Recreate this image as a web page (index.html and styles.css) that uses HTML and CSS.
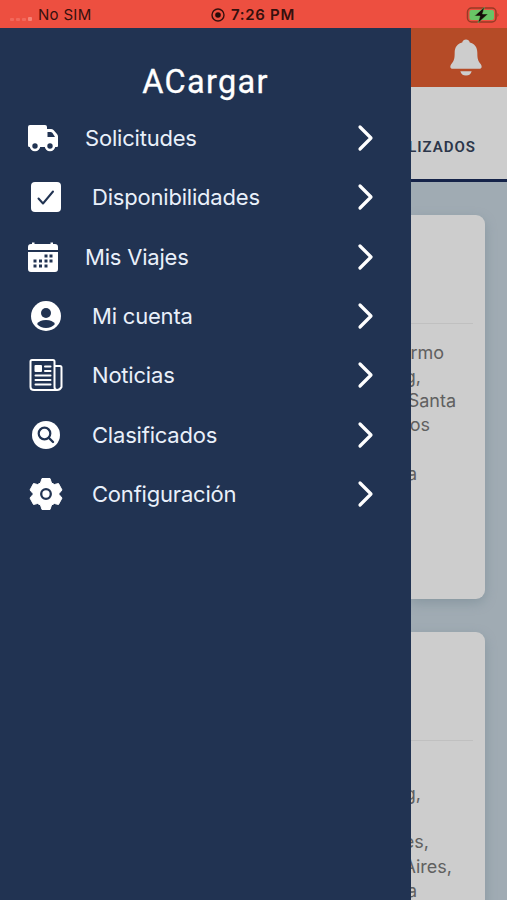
FILE: index.html
```html
<!DOCTYPE html>
<html lang="es">
<head>
<meta charset="utf-8">
<title>ACargar</title>
<link rel="stylesheet" href="styles.css">
</head>
<body>
<header class="status">
  <div class="carrier"><span class="signal"><i></i><i></i><i></i><i></i></span><span>No SIM</span></div>
  <div class="clock"><svg width="14" height="14" viewBox="0 0 14 14"><circle cx="7" cy="7" r="6" fill="none" stroke="#35100d" stroke-width="1.4"/><circle cx="7" cy="7" r="2.8" fill="#260b09"/></svg><span>7:26 PM</span></div>
  <svg class="battery" width="34" height="18" viewBox="0 0 34 18"><rect x="1.5" y="2" width="28.5" height="14" rx="4" fill="none" stroke="#963b25" stroke-width="1.5"/><rect x="3.5" y="4" width="24.5" height="10" rx="2" fill="#69c466"/><path d="M31.5 7q2 2 0 4z" fill="#963b25"/><path d="M18.500 1 8.500 10h5.500l-2 7L22 8h-5.500z" fill="#160d09" stroke="#69c466" stroke-width=".5"/></svg>
</header>
<div class="screen">
  <nav class="drawer">
    <h1>ACargar</h1>
    <ul>
      <li class="near"><svg class="icon" viewBox="0 0 36 36"><path fill="#fff" d="M5 5h15q2 0 2 2v2h4q1.500 0 2.500 1l3.500 4q1 1 1 2.500V26q0 1-1 1H4.500Q3 27 3 25.500V7q0-2 2-2z"/><path fill="#213352" d="M22.500 12h3q1 0 2 1l2.500 4h-7.500z"/><circle cx="10" cy="26" r="4" fill="#213352" stroke="#fff" stroke-width="2.600"/><circle cx="25" cy="26" r="4" fill="#213352" stroke="#fff" stroke-width="2.600"/></svg><span>Solicitudes</span><svg class="chevron" viewBox="0 0 18 28"><path d="m4 3 11 11L4 25"/></svg></li>
      <li><svg class="icon" viewBox="0 0 36 36"><rect x="3" y="3" width="30" height="30" rx="4" fill="#fff"/><path d="m10.500 19.500 4.500 5 10-12" fill="none" stroke="#213352" stroke-width="2" stroke-linecap="round" stroke-linejoin="round"/></svg><span>Disponibilidades</span><svg class="chevron" viewBox="0 0 18 28"><path d="m4 3 11 11L4 25"/></svg></li>
      <li class="near"><svg class="icon" viewBox="0 0 36 36"><path fill="#fff" d="M3 11V8q0-3 3-3h1V3.500h2.500V5h16V3.500H28V5h2q3 0 3 3v3zM3 13h30v17q0 3-3 3H6q-3 0-3-3z"/><path fill="#213352" d="M19.500 15.500h3v3h-3zm5 0h3v3h-3zM8.500 20.500h3v3h-3zm5.500 0h3v3h-3zm5.500 0h3v3h-3zm5 0h3v3h-3zM8.500 25.500h3v3h-3zm5.500 0h3v3h-3zm5.500 0h3v3h-3z"/></svg><span>Mis Viajes</span><svg class="chevron" viewBox="0 0 18 28"><path d="m4 3 11 11L4 25"/></svg></li>
      <li><svg class="icon" viewBox="0 0 36 36"><circle cx="18" cy="18" r="15" fill="#fff"/><circle cx="18" cy="15" r="5" fill="#213352"/><path d="M9 26q2.500-4 9-4t9 4q-3.500 4-9 4t-9-4z" fill="#213352"/></svg><span>Mi cuenta</span><svg class="chevron" viewBox="0 0 18 28"><path d="m4 3 11 11L4 25"/></svg></li>
      <li><svg class="icon" viewBox="0 0 36 36" fill="none" stroke="#fff" stroke-width="2"><path d="M29 33H6q-3.500 0-3.500-3V4.500Q2.500 3 4 3h21q1.500 0 1.500 1.500V30q0 3 2.700 3T33.500 30V10.500Q33.500 9 32 9h-5.500"/><path d="M17 9.500h5.500M17 14h5.500M7.500 18.500h15M7.500 23h15M7.500 27.500h15" stroke-linecap="round"/><rect x="6.500" y="8" width="7.500" height="7" rx="1" fill="#fff" stroke="none"/></svg><span>Noticias</span><svg class="chevron" viewBox="0 0 18 28"><path d="m4 3 11 11L4 25"/></svg></li>
      <li><svg class="icon" viewBox="0 0 36 36"><circle cx="18" cy="18" r="14" fill="#fff"/><circle cx="16.500" cy="16.500" r="5.800" fill="none" stroke="#213352" stroke-width="2.200"/><path d="m21 21 4 4" stroke="#213352" stroke-width="2.400" stroke-linecap="round"/></svg><span>Clasificados</span><svg class="chevron" viewBox="0 0 18 28"><path d="m4 3 11 11L4 25"/></svg></li>
      <li><svg class="icon" viewBox="0 0 36 36"><path d="M14 2.500h8l1.500 4.500 3 1.500 4-1L34 14l-3 3.500v1l3 3.500-3.500 6.500-4-1-3 1.500-1.500 4.500h-8L12.500 29l-3-1.500-4 1L2 22l3-3.500v-1L2 14l3.500-6.500 4 1 3-1.500z" fill="#fff" stroke="#fff" stroke-width="1" stroke-linejoin="round"/><circle cx="18" cy="18" r="4.800" fill="#fff" stroke="#213352" stroke-width="2.300"/></svg><span>Configuración</span><svg class="chevron" viewBox="0 0 18 28"><path d="m4 3 11 11L4 25"/></svg></li>
    </ul>
  </nav>
  <main class="content">
    <div class="toolbar"><svg width="34" height="39" viewBox="0 0 36 40"><path d="M18 1q3 0 4 3c5 1 8 5 8 11 0 7 1 9 3.500 12 2 3 1 5-1.500 5H4c-2.500 0-3.500-2-1.500-5C5 24 6 22 6 15 6 9 9 5 14 4q1-3 4-3zM12 34.500h12q-1 4.500-6 4.500t-6-4.500z" fill="#cdcdcd"/></svg></div>
    <div class="tabs"><p class="tab">LIZADOS</p></div>
    <div class="list">
      <section class="card"><div class="head"></div><div class="lines"><p style="width:33px">rmo</p><p style="width:10px">g,</p><p style="width:45px">Santa</p><p style="width:19px">os</p><p></p><p style="width:6px">a</p></div></section>
      <section class="card"><div class="head"></div><div class="lines"><p></p><p style="width:10px">g,</p><p></p><p style="width:18px">es,</p><p style="width:41px">Aires,</p><p style="width:6px">a</p></div></section>
    </div>
  </main>
</div>
</body>
</html>
```
FILE: styles.css
```css
* { box-sizing: border-box; }
body { margin: 0; height: 900px; overflow: hidden; font-family: Inter, "Liberation Sans", sans-serif; }
h1, ul, p { margin: 0; padding: 0; }
svg { display: block; flex: none; }
.status { height: 28px; display: grid; grid-template-columns: 1fr auto 1fr; align-items: center; padding: 1px 7px 0 10px; background: #ed4f40; color: #35100d; font-size: 15px; }
.carrier { display: flex; align-items: center; gap: 6px; letter-spacing: 0.3px; }
.signal { display: flex; align-items: flex-end; gap: 2px; padding-top: 8px; }
.signal i { width: 4px; height: 3px; border-radius: 1px; background: #f2685b; }
.signal i:last-child { height: 4px; background: #f58377; }
.clock { display: flex; align-items: center; gap: 6px; margin-left: -4px; font-weight: 600; letter-spacing: 0.8px; }
.clock { letter-spacing: 0.7px; }
.battery { justify-self: end; }
.screen { height: 872px; display: grid; grid-template-columns: 411px 96px; }
.drawer { background: #213352; color: #e9f0fa; padding-top: 33px; }
h1 { height: 47.500px; text-align: center; font: 400 32.500px/43px Roboto, sans-serif; letter-spacing: 1.3px; color: #fff; -webkit-text-stroke: 0.3px #fff; }
ul { list-style: none; }
li { height: 59.300px; display: flex; align-items: center; padding: 0 37px 0 28px; font-size: 22px; letter-spacing: -0.2px; }
li.near { padding-left: 25px; }
.icon { width: 36px; height: 36px; margin-right: 28px; }
.near .icon { margin-right: 24px; }
.chevron { width: 18px; height: 28px; margin-left: auto; fill: none; stroke: #fff; stroke-width: 3.2; stroke-linecap: round; stroke-linejoin: round; }
.content { overflow: hidden; background: #a0abb3; display: flex; flex-direction: column; }
.toolbar { flex: none; height: 59px; display: flex; justify-content: center; align-items: center; padding-left: 14px; background: #b54b27; }
.tabs { flex: none; height: 95px; background: #cdcdcd; border-bottom: 3px solid #152349; padding-top: 48px; }
.tab { width: 65px; display: flex; justify-content: flex-end; font: 600 15px/24px Roboto, sans-serif; letter-spacing: 1px; color: #2c364a; }
.list { display: flex; flex-direction: column; gap: 33px; padding-top: 32.500px; }
.card { flex: none; width: 74px; height: 384px; border-radius: 0 9px 9px 0; background: #cdcdcd; box-shadow: 0 4px 12px #8797a0; }
.head { height: 109px; width: 62px; border-bottom: 1px solid #c0c0c0; }
.lines { padding-top: 17px; font-size: 18px; line-height: 24.300px; color: #606060; }
.lines p { height: 24.300px; display: flex; justify-content: flex-end; white-space: nowrap; }
```
